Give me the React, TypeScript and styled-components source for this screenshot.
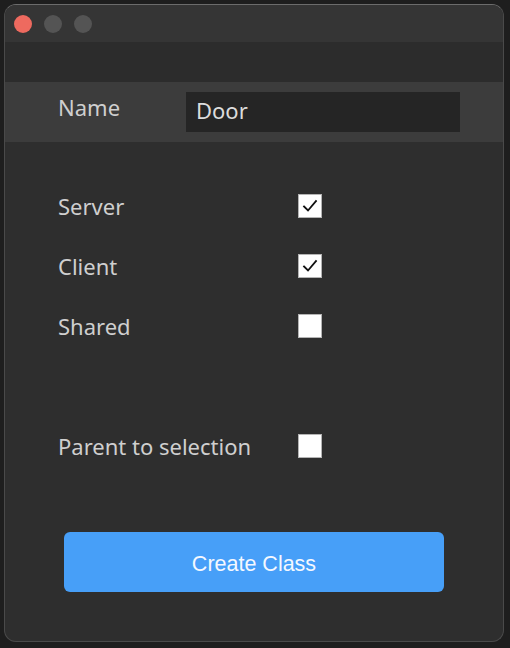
import React from "react";
import styled, { createGlobalStyle } from "styled-components";

const GlobalStyle = createGlobalStyle`
  html, body {
    margin: 0;
    padding: 0;
    background: #1e1e1e;
  }
  body {
    font-family: "Noto Sans", "Open Sans", sans-serif;
  }
`;

const Window = styled.div`
  box-sizing: border-box;
  margin: 4px;
  width: 500px;
  height: 638px;
  border: 1px solid #4a4a4a;
  border-top-color: #6c6c6c;
  border-radius: 12px;
  overflow: hidden;
  background: #2e2e2e;
  display: flex;
  flex-direction: column;
`;

const TitleBar = styled.div`
  height: 37px;
  background: #353535;
  display: flex;
  align-items: center;
  gap: 12px;
  padding-left: 9px;
  padding-top: 1px;
  box-sizing: border-box;
`;

const Light = styled.span<{ $color: string }>`
  width: 18px;
  height: 18px;
  border-radius: 50%;
  background: ${(p) => p.$color};
`;

const Toolbar = styled.div`
  height: 40px;
  background: #2c2c2c;
`;

const NameRow = styled.div`
  height: 60px;
  background: #3c3c3c;
  display: flex;
  align-items: center;
  padding-left: 53px;
`;

const NameLabel = styled.label`
  width: 128px;
  align-self: flex-start;
  margin-top: 10px;
  font-size: 22px;
  line-height: 30px;
  color: #cfcfcf;
`;

const NameInput = styled.input`
  box-sizing: border-box;
  width: 274px;
  height: 40px;
  border: none;
  outline: none;
  background: #252525;
  color: #dcdcdc;
  font-family: "Noto Sans", "Open Sans", sans-serif;
  font-size: 22px;
  padding: 0 0 5px 10px;
`;

const Options = styled.div`
  display: flex;
  flex-direction: column;
  padding-left: 53px;
`;

const OptionRow = styled.div<{ $top: number }>`
  height: 60px;
  margin-top: ${(p) => p.$top}px;
  display: flex;
  align-items: center;
`;

const OptionLabel = styled.span`
  width: 240px;
  font-size: 22px;
  line-height: 30px;
  color: #cfcfcf;
`;

const Box = styled.span`
  box-sizing: border-box;
  width: 24px;
  height: 24px;
  background: #ffffff;
  border: 1px solid #b4b4b4;
  display: flex;
  align-items: center;
  justify-content: center;
`;

const Footer = styled.div`
  padding: 56px 0 0 59px;
`;

const CreateButton = styled.button`
  width: 380px;
  height: 60px;
  border: none;
  border-radius: 6px;
  background: #479ff8;
  color: #f4f8ff;
  font-family: "Liberation Sans", Arial, sans-serif;
  font-size: 21.5px;
  padding: 4px 0 0;
  cursor: pointer;
`;

const Check = () => (
  <svg width="18" height="18" viewBox="0 0 18 18">
    <polyline
      points="3,9.5 7,13.5 15,4"
      fill="none"
      stroke="#111"
      strokeWidth="1.8"
      strokeLinecap="square"
    />
  </svg>
);

const Checkbox = ({ checked }: { checked: boolean }) => (
  <Box>{checked && <Check />}</Box>
);

const options = [
  { label: "Server", checked: true, top: 34 },
  { label: "Client", checked: true, top: 0 },
  { label: "Shared", checked: false, top: 0 },
  { label: "Parent to selection", checked: false, top: 60 },
];

export default function App() {
  return (
    <>
      <GlobalStyle />
      <Window>
        <TitleBar>
          <Light $color="#ee6a5f" />
          <Light $color="#545454" />
          <Light $color="#545454" />
        </TitleBar>
        <Toolbar />
        <NameRow>
          <NameLabel>Name</NameLabel>
          <NameInput defaultValue="Door" />
        </NameRow>
        <Options>
          {options.map((o) => (
            <OptionRow key={o.label} $top={o.top}>
              <OptionLabel>{o.label}</OptionLabel>
              <Checkbox checked={o.checked} />
            </OptionRow>
          ))}
        </Options>
        <Footer>
          <CreateButton>Create Class</CreateButton>
        </Footer>
      </Window>
    </>
  );
}
